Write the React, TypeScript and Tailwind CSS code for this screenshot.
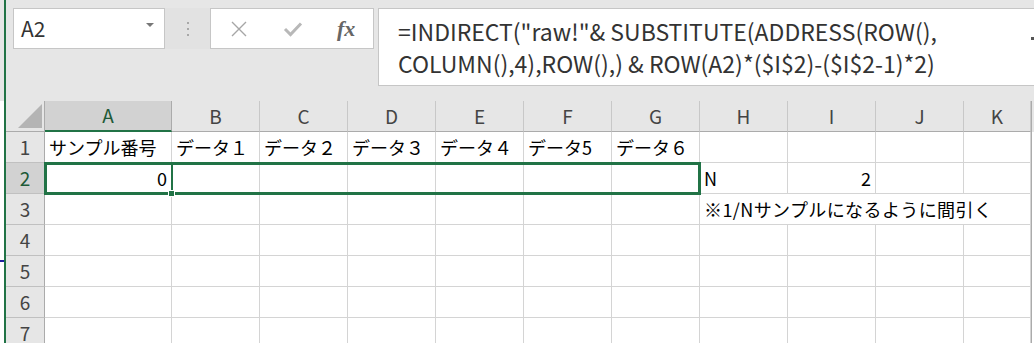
import React from "react";

const FONT = { fontFamily: '"Noto Sans CJK JP", "Noto Sans", sans-serif' };

const COLS = [
  { id: "A", w: "w-[127px]" },
  { id: "B", w: "w-[88px]" },
  { id: "C", w: "w-[88px]" },
  { id: "D", w: "w-[88px]" },
  { id: "E", w: "w-[88px]" },
  { id: "F", w: "w-[88px]" },
  { id: "G", w: "w-[88px]" },
  { id: "H", w: "w-[88px]" },
  { id: "I", w: "w-[88px]" },
  { id: "J", w: "w-[88px]" },
  { id: "K", w: "w-[67px]" },
];

type Cell = { text?: string; right?: boolean };

const ROWS: Record<number, Record<string, Cell>> = {
  1: {
    A: { text: "サンプル番号" },
    B: { text: "データ１" },
    C: { text: "データ２" },
    D: { text: "データ３" },
    E: { text: "データ４" },
    F: { text: "データ5" },
    G: { text: "データ６" },
  },
  2: {
    A: { text: "0", right: true },
    H: { text: "N" },
    I: { text: "2", right: true },
  },
};

function Toolbar() {
  return (
    <div className="h-[101px] shrink-0 bg-[#e6e6e6] flex items-start pt-[8px]">
      {/* name box */}
      <div className="ml-[7px] w-[152px] h-[41px] bg-white border border-[#c6c6c6] flex items-center justify-between pl-[7px] pr-[10px]">
        <span className="text-[21px] text-[#333]" style={FONT}>A2</span>
        <svg width="8" height="5" viewBox="0 0 8 5" className="-mt-[6px]">
          <path d="M0 0 L8 0 L4 4 Z" fill="#777" />
        </svg>
      </div>
      {/* dots */}
      <div className="w-[45px] h-[41px] bg-[#e2e2e2] flex flex-col items-center justify-center gap-[4px]">
        <div className="w-[2px] h-[2px] bg-[#a8a8a8]" />
        <div className="w-[2px] h-[2px] bg-[#a8a8a8]" />
        <div className="w-[2px] h-[2px] bg-[#a8a8a8]" />
      </div>
      {/* buttons */}
      <div className="w-[164px] h-[41px] bg-white border border-[#c6c6c6] flex items-center">
        <div className="w-[54px] flex justify-center ml-[1px]">
          <svg width="18" height="18" viewBox="0 0 18 18">
            <path d="M2 2 L16 16 M16 2 L2 16" stroke="#a6a6a6" strokeWidth="1.4" />
          </svg>
        </div>
        <div className="w-[54px] flex justify-center">
          <svg width="20" height="16" viewBox="0 0 20 16">
            <path d="M2 8 L7.5 13.5 L18 2.5" stroke="#b8b8b8" strokeWidth="3" fill="none" />
          </svg>
        </div>
        <div className="w-[54px] flex justify-center">
          <span className="text-[22px] italic text-[#666] font-semibold" style={{ fontFamily: '"Liberation Serif", serif' }}>
            fx
          </span>
        </div>
      </div>
      {/* formula box */}
      <div className="ml-[4px] flex-1 h-[78px] bg-white border border-[#c6c6c6] border-r-0 relative pl-[19px] pt-[6px]">
        <div className="text-[23px] leading-[32px] text-[#333] tracking-[0px]" style={FONT}>
          <div>=INDIRECT("raw!"&amp; SUBSTITUTE(ADDRESS(ROW(),</div>
          <div>COLUMN(),4),ROW(),) &amp; ROW(A2)*($I$2)-($I$2-1)*2)</div>
        </div>
        <div className="absolute right-0 top-[28px] w-[3px] h-[3px] bg-[#555]" />
      </div>
    </div>
  );
}

function HeaderRow() {
  return (
    <div className="flex h-[31px]">
      <div className="w-[39px] bg-[#e6e6e6] border-r border-b border-[#ababab] relative">
        <svg width="26" height="26" viewBox="0 0 26 26" className="absolute left-[12px] top-[3px]">
          <path d="M24 0 L24 24 L0 24 Z" fill="#b4b4b4" />
        </svg>
      </div>
      {COLS.map(c => {
        const sel = c.id === "A";
        return (
          <div
            key={c.id}
            className={`${c.w} flex items-center justify-center text-[19px] border-r ${
              sel
                ? "bg-[#d2d2d2] border-r-[#ababab] border-b-2 border-b-[#217346] text-[#1e5a38]"
                : "bg-[#e6e6e6] border-r-[#c8c8c8] border-b border-b-[#ababab] text-[#444]"
            }`}
            style={FONT}
          >
            {c.id}
          </div>
        );
      })}
      <div className="flex-1 bg-[#e6e6e6] border-l border-[#ababab]" />
    </div>
  );
}

function RowHeader({ n }: { n: number }) {
  const sel = n === 2;
  return (
    <div
      className={`w-[39px] flex items-center justify-center text-[19px] border-r border-r-[#ababab] border-b border-b-[#c0c0c0] ${
        sel ? "bg-[#d2d2d2] text-[#1e5a38]" : "bg-[#e6e6e6] text-[#444]"
      }`}
      style={FONT}
    >
      {n}
    </div>
  );
}

function DataRow({ n }: { n: number }) {
  const cells = ROWS[n] || {};
  return (
    <div className="flex h-[31px] shrink-0">
      <RowHeader n={n} />
      {COLS.map(c => {
        const cell = cells[c.id];
        return (
          <div
            key={c.id}
            className={`${c.w} bg-white border-r border-b border-[#d4d4d4] flex items-center px-[4px] text-[18px] text-black whitespace-nowrap overflow-hidden ${
              cell?.right ? "justify-end" : ""
            }`}
            style={FONT}
          >
            {cell?.text}
          </div>
        );
      })}
      <div className="flex-1 bg-white border-l border-[#ababab]" />
    </div>
  );
}

function NoteRow() {
  // row 3: H の文字が K まではみ出しているので H〜K を一つにまとめる
  return (
    <div className="flex h-[31px] shrink-0">
      <RowHeader n={3} />
      {COLS.slice(0, 7).map(c => (
        <div key={c.id} className={`${c.w} bg-white border-r border-b border-[#d4d4d4]`} />
      ))}
      <div
        className="w-[331px] bg-white border-r border-b border-[#d4d4d4] flex items-center px-[4px] text-[18px] tracking-[0.4px] text-black whitespace-nowrap"
        style={FONT}
      >
        ※1/Nサンプルになるように間引く
      </div>
      <div className="flex-1 bg-white border-l border-[#ababab]" />
    </div>
  );
}

export default function App() {
  return (
    <div className="w-[1034px] h-[343px] overflow-hidden flex bg-white">
      {/* 後ろのウィンドウの端 */}
      <div className="w-[4px] flex flex-col">
        <div className="h-[101px] shrink-0 bg-[#e6e6e6]" />
        <div className="h-[159px] shrink-0 bg-white" />
        <div className="h-[2px] shrink-0 bg-[#1f1f9e]" />
        <div className="flex-1 bg-white" />
      </div>
      <div className="w-[2px] bg-[#217346]" />
      <div className="flex-1 flex flex-col">
        <Toolbar />
        <div className="relative shrink-0">
          <HeaderRow />
          <DataRow n={1} />
          <DataRow n={2} />
          <NoteRow />
          {[4, 5, 6, 7].map(n => (
            <DataRow key={n} n={n} />
          ))}
          {/* 選択範囲 A2:G2 */}
          <div className="absolute left-[38px] top-[61px] w-[657px] h-[33px] border-[3px] border-[#217346] pointer-events-none" />
          <div className="absolute left-[165px] top-[61px] w-[2px] h-[33px] bg-[#217346]" />
          <div className="absolute left-[162px] top-[89px] w-[7px] h-[7px] bg-[#217346] border border-white" />
        </div>
      </div>
    </div>
  );
}
